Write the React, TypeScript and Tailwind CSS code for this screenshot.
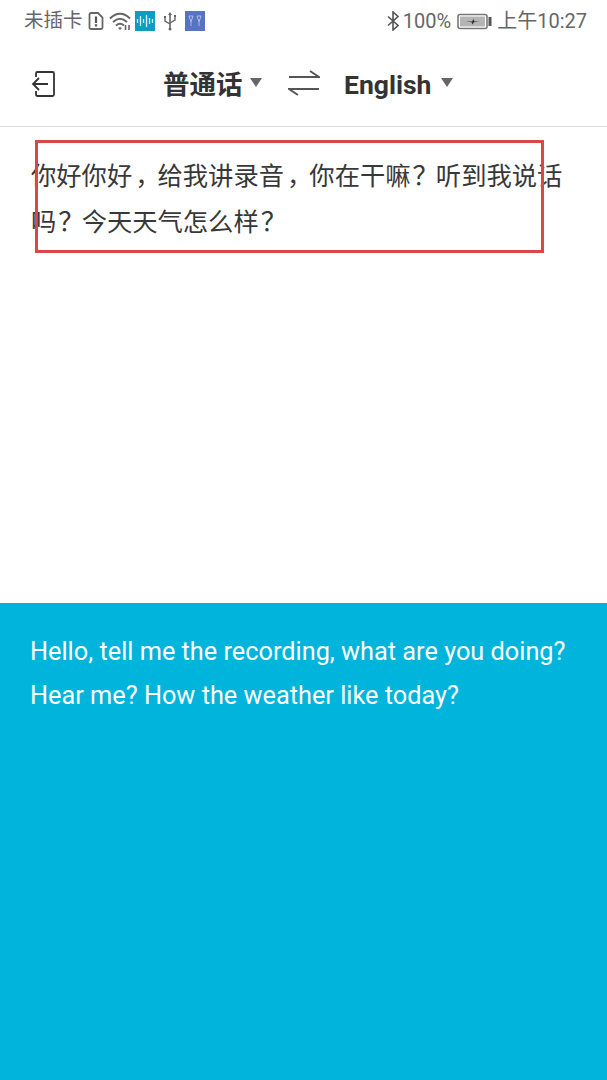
const cjk = "font-['Roboto','Noto_Sans_CJK_SC',sans-serif]";
const qm = "leading-[0] text-[26px] pl-[2px] tracking-[-2.700px]";
const comma = "leading-[0] pl-[3px] tracking-[-3px]";

function SimIcon() {
  return (
    <svg width="16" height="18" viewBox="0 0 16 18" fill="none" className="ml-[5px]">
      <path d="M1.500 2.500a1.500 1.500 0 0 1 1.500-1.500h7l4.500 4.500v10a1.500 1.500 0 0 1-1.500 1.500H3a1.500 1.500 0 0 1-1.500-1.500z" stroke="#666" strokeWidth="1.800" />
      <path d="M8 4.500v6.500" stroke="#555" strokeWidth="2.200" />
      <path d="M8 12.200v2.300" stroke="#555" strokeWidth="2.200" />
    </svg>
  );
}

function WifiIcon() {
  return (
    <svg width="24" height="19" viewBox="0 0 24 19" fill="none" className="ml-[5px]">
      <path d="M1 6.500c6-6.500 14-6.500 20 0" stroke="#666" strokeWidth="2" />
      <path d="M4 10c4.500-4.200 9.500-4.200 14 0" stroke="#666" strokeWidth="2" />
      <path d="M7 13.500c2.500-2.200 5.500-2.200 8 0" stroke="#666" strokeWidth="2" />
      <path d="M9 16l2 2 2-2c-1.200-1-2.800-1-4 0z" fill="#666" />
      <path d="M16.500 13v5M20 13v5" stroke="#666" strokeWidth="1.600" />
    </svg>
  );
}

function VoiceIcon() {
  return (
    <svg width="20" height="20" viewBox="0 0 20 20" className="ml-[2px]">
      <rect width="20" height="20" fill="#0c9cc4" />
      <path d="M2.500 8v4M5.500 5v10M8.500 8v4M11.500 4v12M14.500 7v6M17.500 8v4" stroke="#d8f3fb" strokeWidth="1.300" fill="none" />
    </svg>
  );
}

function UsbIcon() {
  return (
    <svg width="14" height="20" viewBox="0 0 14 20" fill="none" className="ml-[8px]">
      <path d="M7 1l-2 3h4z" fill="#666" />
      <path d="M7 3v16" stroke="#666" strokeWidth="1.600" />
      <path d="M2 7v3l5 3M12 6v3l-5 3" stroke="#666" strokeWidth="1.400" />
      <rect x="1" y="5" width="2" height="2" fill="#666" />
      <rect x="11" y="4" width="2" height="2" fill="#666" />
      <circle cx="7" cy="18" r="1.500" fill="#666" />
    </svg>
  );
}

function PicIcon() {
  return (
    <svg width="20" height="20" viewBox="0 0 20 20" fill="none" className="ml-[8px]">
      <rect width="20" height="20" fill="#5674c2" />
      <path d="M4 5h4l-2 6zM12 5h4l-2 6z" stroke="#a9bbe6" strokeWidth="1" />
      <path d="M6 11v4M14 11v4" stroke="#a9bbe6" strokeWidth="1" />
    </svg>
  );
}

function BluetoothIcon() {
  return (
    <svg width="12" height="20" viewBox="0 0 12 20" fill="none">
      <path d="M1 5.500l10 9-5 4.500V1l5 4.500-10 9" stroke="#555" strokeWidth="1.600" />
    </svg>
  );
}

function BatteryIcon() {
  return (
    <svg width="35" height="17" viewBox="0 0 35 17" fill="none" className="ml-[6px]">
      <rect x="1" y="1.500" width="29" height="14" rx="2" stroke="#777" strokeWidth="1.600" />
      <rect x="3" y="3.500" width="25" height="10" fill="#b5b5b5" />
      <rect x="31.500" y="4" width="3" height="9" fill="#555" />
      <path d="M9 8.500h6l1.500-2.500 1 2.500h5.500l-6 .8-1.500 2.200-1-2.200z" fill="#333" />
    </svg>
  );
}

function Triangle() {
  return <div className="w-0 h-0 border-l-[6px] border-r-[6px] border-t-[9px] border-l-transparent border-r-transparent border-t-[#666]" />;
}

export default function App() {
  return (
    <div className={`relative w-[607px] h-[1080px] flex flex-col bg-white overflow-hidden ${cjk}`}>
      <div className="h-[40px] flex items-center justify-between pl-[24px] pr-[20px] pt-[2px] text-[#666] text-[19.500px]">
        <div className="flex items-center">
          <span className="w-[59px]">未插卡</span>
          <SimIcon />
          <WifiIcon />
          <VoiceIcon />
          <UsbIcon />
          <PicIcon />
        </div>
        <div className="flex items-center text-[20px]">
          <BluetoothIcon />
          <span className="ml-[4px]">100%</span>
          <BatteryIcon />
          <span className="ml-[5px]">上午10:27</span>
        </div>
      </div>

      <div className="h-[87px] flex items-center border-b border-[#dedede] pt-[2px]">
        <svg width="24" height="28" viewBox="0 0 24 28" fill="none" className="ml-[31px]">
          <path d="M5 7V3.500a1.500 1.500 0 0 1 1.500-1.500h15a1.500 1.500 0 0 1 1.500 1.500v21a1.500 1.500 0 0 1-1.500 1.500h-15A1.500 1.500 0 0 1 5 24.500V21" stroke="#333" strokeWidth="1.800" />
          <path d="M17 14H2M8 8l-6 6 6 6" stroke="#333" strokeWidth="1.800" />
        </svg>
        <div className="ml-[108px] flex items-center text-[#333] text-[26.500px] font-bold">
          <span className="w-[80px] mt-[2px]">普通话</span>
          <div className="ml-[7px] mb-[4px]"><Triangle /></div>
        </div>
        <svg width="32" height="28" viewBox="0 0 32 28" fill="none" className="ml-[26px]">
          <path d="M1 7h30L22 1" stroke="#555" strokeWidth="2" />
          <path d="M31 19H1l9 6" stroke="#555" strokeWidth="2" />
        </svg>
        <div className="ml-[24px] flex items-center text-[#333] text-[26.500px] font-bold">
          <span className="w-[97px] mt-[2px]">English</span>
          <div className="mb-[4px]"><Triangle /></div>
        </div>
      </div>

      <div className="h-[476px] pl-[31px] pt-[27px] text-[#383838] text-[25.300px] leading-[46px]">
        <div>你好你好<span className={comma}>，</span>给我讲录音<span className={comma}>，</span>你在干嘛<span className={qm}>？</span>听到我说话</div>
        <div>吗<span className={qm}>？</span>今天天气怎么样<span className={qm}>？</span></div>
      </div>

      <div className="flex-1 bg-[#00b4dc] pl-[30px] pt-[27px] text-white text-[25.300px] leading-[44px]">
        <div>Hello, tell me the recording, what are you doing?</div>
        <div>Hear me? How the weather like today?</div>
      </div>

      <div className="absolute left-[35px] top-[140px] w-[509px] h-[113px] border-[3px] border-[#d9474b]" />
    </div>
  );
}
